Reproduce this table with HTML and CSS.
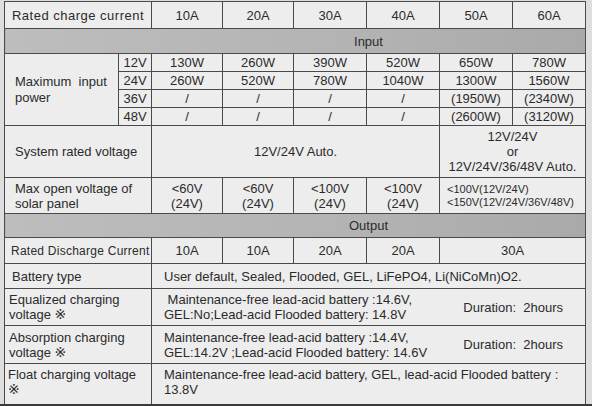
FILE: index.html
```html
<!DOCTYPE html>
<html>
<head>
<meta charset="utf-8">
<link rel="stylesheet" href="styles.css">
</head>
<body>
<div class="page">
<table class="spec">
  <colgroup>
    <col class="c-lab"><col class="c-sub">
    <col class="c-a"><col class="c-a">
    <col class="c-b"><col class="c-b"><col class="c-b"><col class="c-b">
  </colgroup>
  <tr class="r-head">
    <td colspan="2" class="center wide">Rated charge current</td>
    <td class="center">10A</td><td class="center">20A</td><td class="center">30A</td>
    <td class="center">40A</td><td class="center">50A</td><td class="center">60A</td>
  </tr>
  <tr class="r-band">
    <td colspan="8" class="band">Input</td>
  </tr>
  <tr class="r-pow">
    <td rowspan="4" class="lab lab-power">Maximum&nbsp; input<br>power</td>
    <td class="center sub">12V</td>
    <td class="center">130W</td><td class="center">260W</td><td class="center">390W</td>
    <td class="center">520W</td><td class="center">650W</td><td class="center">780W</td>
  </tr>
  <tr class="r-pow">
    <td class="center sub">24V</td>
    <td class="center">260W</td><td class="center">520W</td><td class="center">780W</td>
    <td class="center">1040W</td><td class="center">1300W</td><td class="center">1560W</td>
  </tr>
  <tr class="r-pow">
    <td class="center sub">36V</td>
    <td class="center">/</td><td class="center">/</td><td class="center">/</td>
    <td class="center">/</td><td class="center">(1950W)</td><td class="center">(2340W)</td>
  </tr>
  <tr class="r-pow">
    <td class="center sub">48V</td>
    <td class="center">/</td><td class="center">/</td><td class="center">/</td>
    <td class="center">/</td><td class="center">(2600W)</td><td class="center">(3120W)</td>
  </tr>
  <tr class="r-sys">
    <td colspan="2" class="lab">System rated voltage</td>
    <td colspan="4" class="center">12V/24V Auto.</td>
    <td colspan="2" class="center tight">12V/24V<br>or<br>12V/24V/36/48V Auto.</td>
  </tr>
  <tr class="r-open">
    <td colspan="2" class="lab tight">Max open voltage of<br>solar panel</td>
    <td class="center tight">&lt;60V<br>(24V)</td>
    <td class="center tight">&lt;60V<br>(24V)</td>
    <td class="center tight">&lt;100V<br>(24V)</td>
    <td class="center tight">&lt;100V<br>(24V)</td>
    <td colspan="2" class="small">&lt;100V(12V/24V)<br>&lt;150V(12V/24V/36V/48V)</td>
  </tr>
  <tr class="r-band2">
    <td colspan="8" class="band">Output</td>
  </tr>
  <tr class="r-dis">
    <td colspan="2" class="lab lab-dis">Rated Discharge Current</td>
    <td class="center">10A</td><td class="center">10A</td><td class="center">20A</td>
    <td class="center">20A</td><td colspan="2" class="center">30A</td>
  </tr>
  <tr class="r-bat">
    <td colspan="2" class="lab lab-bat">Battery type</td>
    <td colspan="6" class="val">User default, Sealed, Flooded, GEL, LiFePO4, Li(NiCoMn)O2.</td>
  </tr>
  <tr class="r-eq">
    <td colspan="2" class="lab lab-two tight">Equalized charging<br>voltage <span class="mark">※</span></td>
    <td colspan="6" class="val">
      <div class="split">
        <div class="tight">&nbsp;Maintenance-free lead-acid battery :14.6V,<br>GEL:No;Lead-acid Flooded battery: 14.8V</div>
        <div class="dur">Duration:&nbsp; 2hours</div>
      </div>
    </td>
  </tr>
  <tr class="r-abs">
    <td colspan="2" class="lab lab-two tight">Absorption charging<br>voltage <span class="mark">※</span></td>
    <td colspan="6" class="val">
      <div class="split">
        <div class="tight">Maintenance-free lead-acid battery :14.4V,<br>GEL:14.2V ;Lead-acid Flooded battery: 14.6V</div>
        <div class="dur">Duration:&nbsp; 2hours</div>
      </div>
    </td>
  </tr>
  <tr class="r-flt">
    <td colspan="2" class="lab lab-flt tight">Float charging voltage<br><span class="mark">※</span></td>
    <td colspan="6" class="val top tight">Maintenance-free lead-acid battery, GEL, lead-acid Flooded battery :<br>13.8V</td>
  </tr>
</table>
</div>
<div class="edge"></div>
</body>
</html>
```

FILE: styles.css
```css
html, body {
  margin: 0;
  padding: 0;
}
body {
  width: 592px;
  height: 406px;
  overflow: hidden;
  background: #dedede;
  font-family: "Liberation Sans", Arial, sans-serif;
  color: #2b2b2b;
  position: relative;
}
.page {
  padding: 1px 0 0 4px;
}
.spec {
  border-collapse: collapse;
  table-layout: fixed;
  width: 582px;
  background: #ededed;
  font-size: 13px;
}
.spec td {
  border: 1px solid #4a4a4a;
  padding: 0;
  vertical-align: middle;
  white-space: nowrap;
  overflow: hidden;
}
.c-lab { width: 114px; }
.c-sub { width: 33px; }
.c-a { width: 71px; }
.c-b { width: 73px; }

.r-head { height: 27px; }
.r-band { height: 25px; }
.r-pow { height: 18px; }
.r-sys { height: 52px; }
.r-open { height: 36px; }
.r-band2 { height: 24px; }
.r-dis { height: 26px; }
.r-bat { height: 25px; }
.r-eq { height: 37px; }
.r-abs { height: 38px; }
.r-flt { height: 41px; }

.center { text-align: center; }
.wide { letter-spacing: 0.5px; }
.tight { line-height: 15px; }
.sub { text-align: center; }
.lab { padding-left: 10px !important; }
.lab-power { padding-left: 10px !important; line-height: 16px; }
.lab-dis { padding-left: 6px !important; font-size: 12px; letter-spacing: 0.25px; }
.lab-bat { padding-left: 7px !important; }
.lab-two { padding-left: 4px !important; }
.lab-flt { padding-left: 3px !important; vertical-align: top !important; padding-top: 3px !important; }
.band {
  background: linear-gradient(90deg, #bdbdbd 0%, #b3b3b3 60%, #a9a9a9 100%);
  text-align: center;
  padding-left: 147px !important;
  color: #2b2b2b;
}
.small {
  font-size: 11px;
  line-height: 13px;
  padding-left: 7px !important;
}
.val {
  padding-left: 12px !important;
}
.val.top {
  vertical-align: top;
  padding-top: 3px !important;
}
.split {
  display: flex;
  align-items: center;
  justify-content: space-between;
  padding-right: 22px;
}
.dur {
  white-space: nowrap;
}
.mark {
  font-family: "DejaVu Sans", "Noto Sans CJK JP", sans-serif;
  font-size: 14px;
}
.edge {
  position: absolute;
  left: 0;
  right: 0;
  bottom: 0;
  height: 2px;
  background: #3a3a3a;
}
```
